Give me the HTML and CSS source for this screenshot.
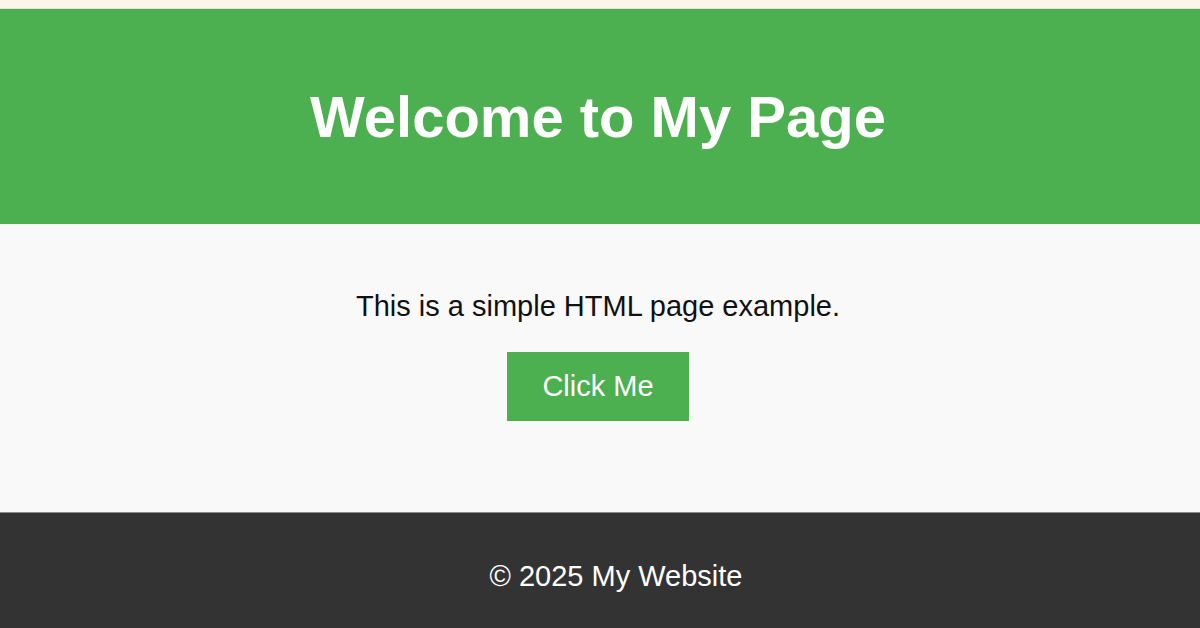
FILE: index.html
```html
<!DOCTYPE html>
<html lang="en">
<head>
<meta charset="utf-8">
<title>My Page</title>
<link rel="stylesheet" href="styles.css">
</head>
<body>
<div class="topstrip"></div>
<header class="site-header">
  <h1 class="title">Welcome to My Page</h1>
</header>
<main class="content">
  <p class="lead">This is a simple HTML page example.</p>
  <button class="btn" type="button">Click Me</button>
</main>
<footer class="site-footer">
  <p class="copy">© 2025 My Website</p>
</footer>
</body>
</html>
```
FILE: styles.css
```css
html, body {
  margin: 0;
  padding: 0;
}
body {
  font-family: "Liberation Sans", Arial, sans-serif;
  background: #f9f9f9;
  height: 628px;
  display: flex;
  flex-direction: column;
  overflow: hidden;
}
.topstrip {
  height: 8px;
  background: #fdf5e9;
  border-bottom: 1px solid #dfe6d4;
}
.site-header {
  background: #4caf50;
  height: 215px;
  padding-right: 4px;
  display: flex;
  align-items: center;
  justify-content: center;
}
.title {
  margin: 0;
  color: #fff;
  font-size: 58px;
  font-weight: bold;
}
.content {
  height: 288px;
  padding-right: 4px;
  display: flex;
  flex-direction: column;
  align-items: center;
  background: #f9f9f9;
}
.lead {
  margin: 64px 0 0;
  font-size: 29px;
  line-height: 36px;
  color: #111;
}
.btn {
  margin-top: 28px;
  width: 182px;
  height: 69px;
  border: none;
  background: #4caf50;
  color: #fff;
  font-family: "Liberation Sans", Arial, sans-serif;
  font-size: 29px;
  padding: 0;
}
.site-footer {
  flex: 1;
  background: #333;
  border-top: 1px solid #8a8a8a;
  padding: 12px 0 0 32px;
  display: flex;
  align-items: center;
  justify-content: center;
}
.copy {
  margin: 0;
  color: #fff;
  font-size: 29px;
}
```
